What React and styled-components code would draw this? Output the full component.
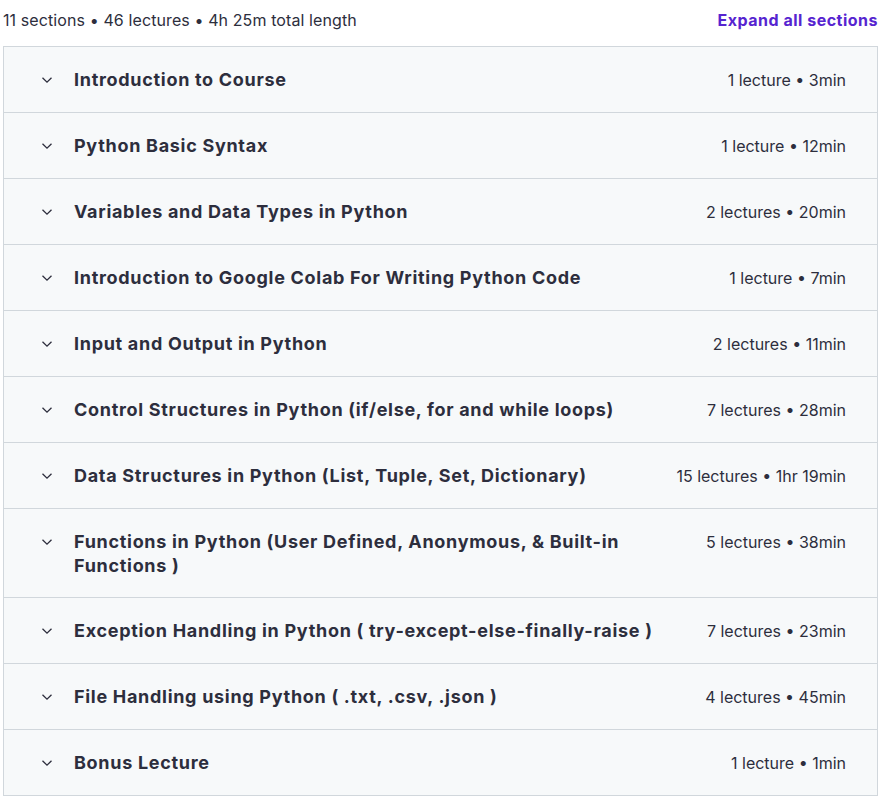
import styled, { createGlobalStyle } from "styled-components";

const GlobalStyle = createGlobalStyle`
  html, body {
    margin: 0;
    padding: 0;
    background: #ffffff;
  }
  body {
    font-family: Inter, "Liberation Sans", Arial, sans-serif;
    color: #2d2e3d;
  }
`;

const Page = styled.div`
  width: 875px;
  margin-left: 3px;
`;

const TopBar = styled.div`
  display: flex;
  justify-content: space-between;
  align-items: center;
  height: 42px;
  padding-bottom: 4px;
`;

const Summary = styled.span`
  font-size: 16px;
  letter-spacing: 0.1px;
  margin-top: -2px;
`;

const ExpandButton = styled.button`
  border: 0;
  background: none;
  padding: 0;
  font-family: inherit;
  font-size: 16px;
  font-weight: 700;
  color: #5624d0;
  letter-spacing: 0.5px;
  cursor: pointer;
  margin-top: -2px;
`;

const Sections = styled.div`
  border: 1px solid #d1d7dc;
  border-bottom: 0;
`;

const SectionRow = styled.div`
  display: flex;
  align-items: flex-start;
  padding: 21px 31px 20px 37px;
  background: #f7f9fa;
  border-bottom: 1px solid #d1d7dc;
`;

const Chevron = styled.span`
  display: flex;
  width: 12px;
  height: 24px;
  align-items: center;
  flex-shrink: 0;
  margin-right: 21px;
`;

const Title = styled.span`
  flex: 1;
  font-size: 18px;
  font-weight: 700;
  line-height: 23.5px;
  letter-spacing: 0.7px;
  padding-right: 28px;
`;

const Meta = styled.span`
  flex-shrink: 0;
  font-size: 16px;
  line-height: 24px;
`;

const sections = [
  ["Introduction to Course", "1 lecture • 3min"],
  ["Python Basic Syntax", "1 lecture • 12min"],
  ["Variables and Data Types in Python", "2 lectures • 20min"],
  ["Introduction to Google Colab For Writing Python Code", "1 lecture • 7min"],
  ["Input and Output in Python", "2 lectures • 11min"],
  ["Control Structures in Python (if/else, for and while loops)", "7 lectures • 28min"],
  ["Data Structures in Python (List, Tuple, Set, Dictionary)", "15 lectures • 1hr 19min"],
  ["Functions in Python (User Defined, Anonymous, & Built-in Functions )", "5 lectures • 38min"],
  ["Exception Handling in Python ( try-except-else-finally-raise )", "7 lectures • 23min"],
  ["File Handling using Python ( .txt, .csv, .json )", "4 lectures • 45min"],
  ["Bonus Lecture", "1 lecture • 1min"],
];

function ChevronIcon() {
  return (
    <svg width="12" height="8" viewBox="0 0 12 8" fill="none">
      <path d="M1.5 1.8 L6 6.2 L10.5 1.8" stroke="currentColor" strokeWidth="1.3" />
    </svg>
  );
}

function App() {
  return (
    <Page>
      <GlobalStyle />
      <TopBar>
        <Summary>11 sections • 46 lectures • 4h 25m total length</Summary>
        <ExpandButton>Expand all sections</ExpandButton>
      </TopBar>
      <Sections>
        {sections.map(([title, meta]) => (
          <SectionRow key={title}>
            <Chevron>
              <ChevronIcon />
            </Chevron>
            <Title>{title}</Title>
            <Meta>{meta}</Meta>
          </SectionRow>
        ))}
      </Sections>
    </Page>
  );
}

export default App;
